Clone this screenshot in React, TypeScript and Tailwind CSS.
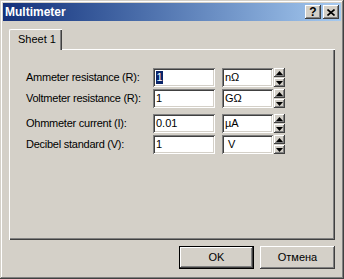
import React from 'react';

const raised =
  'shadow-[inset_-1px_-1px_#404040,inset_1px_1px_#ffffff,inset_-2px_-2px_#808080,inset_2px_2px_#d4d0c8]';
const sunken =
  'shadow-[inset_1px_1px_#808080,inset_-1px_-1px_#ffffff,inset_2px_2px_#404040,inset_-2px_-2px_#d4d0c8]';

const rows = [
  { label: 'Ammeter resistance (R):', value: '1', unit: 'nΩ', selected: true },
  { label: 'Voltmeter resistance (R):', value: '1', unit: 'GΩ' },
  { label: 'Ohmmeter current (I):', value: '0.01', unit: 'µA', gap: true },
  { label: 'Decibel standard (V):', value: '1', unit: '\u00a0V' },
];

const Spinner = () => (
  <div className="flex flex-col w-[11px] h-[19px] gap-[1px]">
    <div className={`flex-1 bg-[#d4d0c8] flex items-center justify-center ${raised}`}>
      <svg width="7" height="4" viewBox="0 0 7 4">
        <path d="M3.5 0 L7 4 L0 4 Z" fill="#000" />
      </svg>
    </div>
    <div className={`flex-1 bg-[#d4d0c8] flex items-center justify-center ${raised}`}>
      <svg width="7" height="4" viewBox="0 0 7 4">
        <path d="M0 0 L7 0 L3.5 4 Z" fill="#000" />
      </svg>
    </div>
  </div>
);

export default function App() {
  return (
    <div
      className={`w-[344px] h-[279px] bg-[#d4d0c8] p-[3px] flex flex-col font-['Liberation_Sans',Arial,sans-serif] text-[11px] text-black shadow-[inset_-1px_-1px_#404040,inset_1px_1px_#d4d0c8,inset_-2px_-2px_#808080,inset_2px_2px_#ffffff]`}
    >
      {/* Title bar */}
      <div className="h-[18px] bg-gradient-to-r from-[#14307a] to-[#a6caf0] flex items-center pl-[2px] pr-[2px]">
        <span className="text-white font-bold text-[12px] leading-none">Multimeter</span>
        <div className="ml-auto flex gap-[2px]">
          <div className={`w-[16px] h-[14px] bg-[#d4d0c8] flex items-center justify-center font-bold text-[12px] leading-none ${raised}`}>
            ?
          </div>
          <div className={`w-[16px] h-[14px] bg-[#d4d0c8] flex items-center justify-center ${raised}`}>
            <svg width="8" height="7" viewBox="0 0 8 7">
              <path d="M0.5 0.5 L7.5 6.5 M7.5 0.5 L0.5 6.5" stroke="#000" strokeWidth="1.6" />
            </svg>
          </div>
        </div>
      </div>

      {/* Tabs */}
      <div className="px-[6px] pt-[8px] flex flex-col">
        <div className="flex">
          <div className="relative z-10 -mb-[1px] w-[53px] h-[21px] bg-[#d4d0c8] rounded-tl-[2px] border-l border-t border-white shadow-[inset_-1px_0_#404040,inset_-2px_0_#808080] flex items-center pl-[8px] pb-[1px]">
            Sheet 1
          </div>
        </div>
        <div className="h-[191px] bg-[#d4d0c8] shadow-[inset_1px_1px_#ffffff,inset_-1px_-1px_#404040,inset_-2px_-2px_#808080] pt-[17px] pl-[17px] flex flex-col">
          {rows.map((r) => (
            <div key={r.label} className={`flex items-center h-[19px] ${r.gap ? 'mt-[6px]' : 'mt-[2px]'}`}>
              <div className="w-[127px] tracking-[-0.25px]">{r.label}</div>
              <div className={`w-[62px] h-[19px] bg-white flex items-center pl-[3px] ${sunken}`}>
                {r.selected ? (
                  <span className="bg-[#0a246a] text-white leading-[13px] px-[0.5px]">{r.value}</span>
                ) : (
                  <span>{r.value}</span>
                )}
              </div>
              <div className={`ml-[7px] w-[51px] h-[19px] bg-white flex items-center pl-[3px] ${sunken}`}>
                {r.unit}
              </div>
              <div className="ml-[1px]">
                <Spinner />
              </div>
            </div>
          ))}
        </div>
      </div>

      {/* Buttons */}
      <div className="flex justify-end gap-[6px] pr-[6px] mt-[6px]">
        <div className="w-[75px] h-[23px] border border-black">
          <div className={`w-full h-full bg-[#d4d0c8] flex items-center justify-center ${raised}`}>OK</div>
        </div>
        <div className={`w-[75px] h-[23px] bg-[#d4d0c8] flex items-center justify-center ${raised}`}>Отмена</div>
      </div>
    </div>
  );
}
